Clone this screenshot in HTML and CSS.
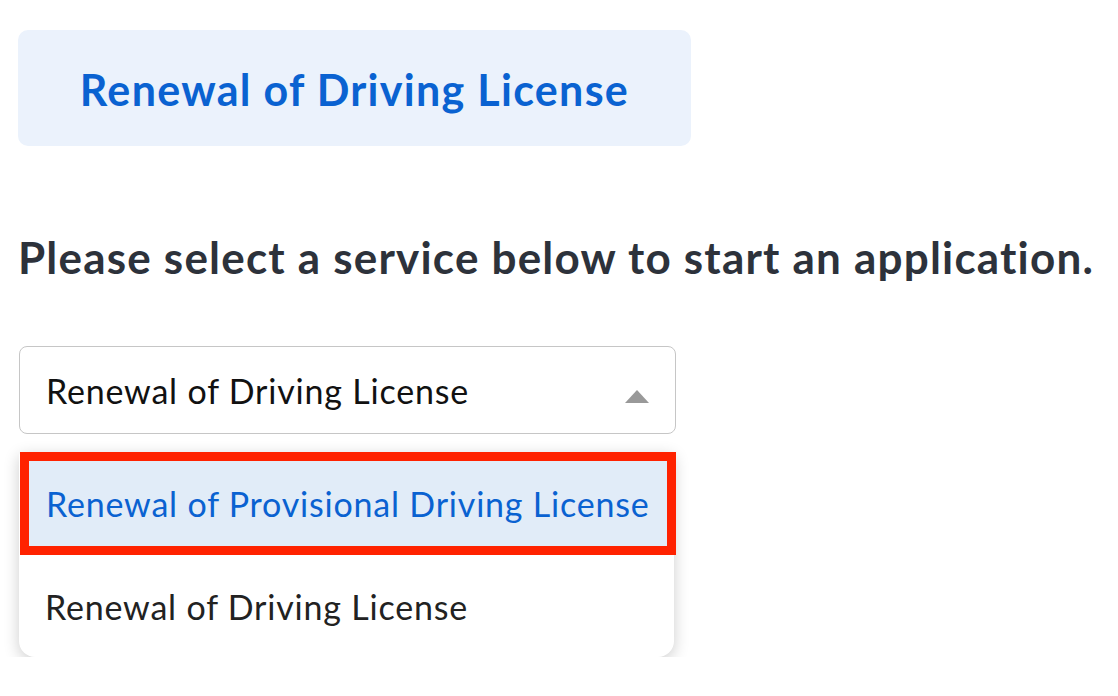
FILE: index.html
```html
<!DOCTYPE html>
<html lang="en">
<head>
<meta charset="utf-8">
<title>Select a service</title>
<link rel="stylesheet" href="styles.css">
</head>
<body>
<div class="page">
  <div class="banner">Renewal of Driving License</div>
  <h2 class="prompt">Please select a service below to start an application.</h2>
  <div class="select-wrap">
    <div class="select">
      <span class="select-value">Renewal of Driving License</span>
      <span class="caret"></span>
    </div>
    <div class="menu">
      <div class="option option-active">Renewal of Provisional Driving License</div>
      <div class="option option-last">Renewal of Driving License</div>
    </div>
  </div>
</div>
</body>
</html>
```

FILE: styles.css
```css
html, body {
  margin: 0;
  padding: 0;
  background: #ffffff;
}
body {
  font-family: Lato, "Noto Sans", "Liberation Sans", sans-serif;
}
.page {
  padding: 30px 18px 0 18px;
}
.banner {
  width: 673px;
  height: 116px;
  box-sizing: border-box;
  background: #ebf2fc;
  border-radius: 10px;
  display: flex;
  align-items: center;
  justify-content: center;
  color: #0a62d1;
  font-weight: 700;
  font-size: 43px;
  letter-spacing: 1.3px;
  padding-top: 2px;
}
.prompt {
  margin: 86px 0 0 0;
  font-size: 44px;
  letter-spacing: 1.2px;
  font-weight: 700;
  color: #2d323b;
  line-height: 50px;
  white-space: nowrap;
}
.select-wrap {
  width: 657px;
  margin-top: 64px;
  margin-left: 1px;
}
.select {
  height: 88px;
  box-sizing: border-box;
  border: 1.5px solid #c6c6c6;
  border-radius: 8px;
  display: flex;
  align-items: center;
  justify-content: space-between;
  padding: 0 26px 0 26px;
}
.select-value {
  font-size: 34px;
  letter-spacing: 0.8px;
  color: #111111;
}
.caret {
  width: 0;
  height: 0;
  border-left: 12px solid transparent;
  border-right: 12px solid transparent;
  border-bottom: 13px solid #999999;
  margin-top: 12px;
}
.menu {
  width: 655px;
  margin-top: 18px;
  background: #ffffff;
  border-radius: 4px 4px 16px 16px;
  box-shadow: 0 4px 16px rgba(0, 0, 0, 0.2);
}
.option {
  height: 100px;
  box-sizing: border-box;
  display: flex;
  align-items: center;
  padding: 0 26px;
  font-size: 34px;
  letter-spacing: 0.8px;
  color: #222222;
  white-space: nowrap;
}
.option-active {
  height: 103px;
  background: #e1ecf8;
  color: #0a62d1;
  border: 9px solid #ff2200;
  margin: 2px -2px 0 1px;
  padding: 0 0 0 17px;
}
.option-last {
  height: 102px;
  border-radius: 0 0 16px 16px;
}
```
